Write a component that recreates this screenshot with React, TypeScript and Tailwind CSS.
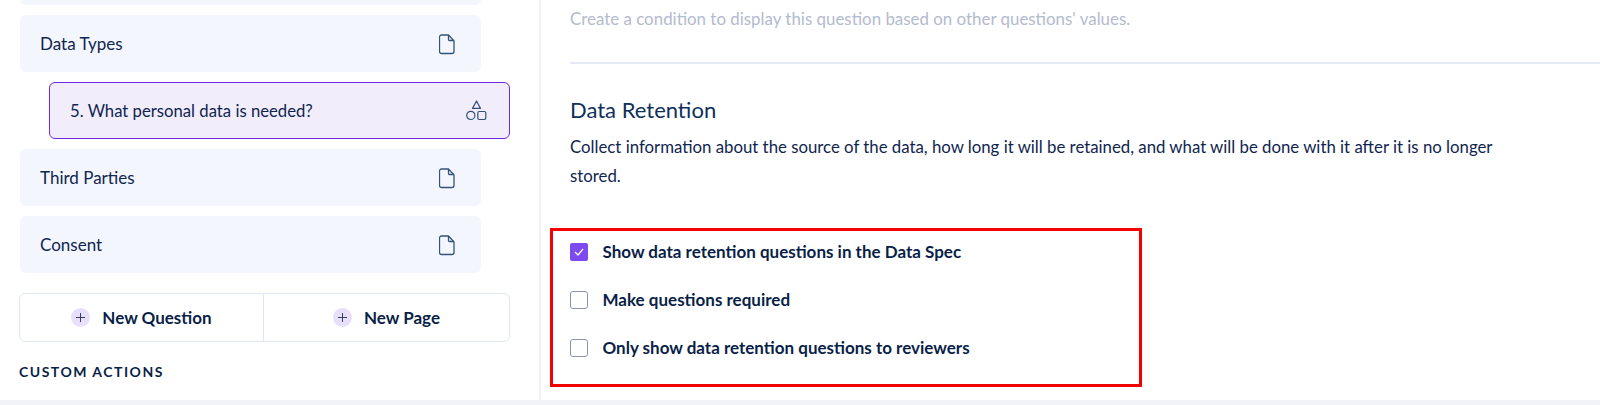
import React from "react";

function DocIcon() {
  return (
    <svg className="mt-[2px]" width="16" height="21" viewBox="0 0 16 21" fill="none" stroke="#33527a" strokeWidth="1.3" strokeLinejoin="round">
      <path d="M2.5 1h7L15 7v10.5a2 2 0 0 1-2 2H2.5a2 2 0 0 1-2-2V3a2 2 0 0 1 2-2z" />
      <path d="M9.5 1v4.5a1 1 0 0 0 1 1H15" />
    </svg>
  );
}

function ShapesIcon() {
  return (
    <svg width="21" height="21" viewBox="0 0 21 21" fill="none" stroke="#33527a" strokeWidth="1.2" strokeLinejoin="round">
      <path d="M10.5 1 L14.5 8.4 H6.5 Z" />
      <circle cx="4.8" cy="15.4" r="4.1" />
      <rect x="11.8" y="11.5" width="8" height="8" rx="1.4" />
    </svg>
  );
}

function Card({ label }: { label: string }) {
  return (
    <div className="flex h-[57px] w-[461px] items-center justify-between rounded-md bg-[#f4f6fe] pl-[20px] pr-[26px] text-[17px]">
      <span>{label}</span>
      <DocIcon />
    </div>
  );
}

function AddButton({ label, width }: { label: string; width: string }) {
  return (
    <div className={`flex h-full items-center justify-center gap-[12px] ${width}`}>
      <span className="flex h-[19px] w-[19px] items-center justify-center rounded-full bg-[#e7dffb]">
        <svg width="9" height="9" viewBox="0 0 9 9" stroke="#33415f" strokeWidth="1">
          <path d="M4.5 0v9M0 4.5h9" />
        </svg>
      </span>
      <span className="text-[17px] font-bold text-[#0a1f48]">{label}</span>
    </div>
  );
}

function Check({ label, checked }: { label: string; checked?: boolean }) {
  return (
    <label className="flex items-center gap-[14.5px]">
      {checked ? (
        <span className="flex h-[18px] w-[18px] items-center justify-center rounded-[2px] bg-[#7c4af0]">
          <svg width="10" height="8" viewBox="0 0 10 8" fill="none" stroke="#ffffff" strokeWidth="1.3">
            <path d="M1 4l3 3 5-6" />
          </svg>
        </span>
      ) : (
        <span className="h-[18px] w-[18px] rounded-[3px] border-[1.5px] border-[#8794ad] bg-white" />
      )}
      <span className="text-[17px] font-bold leading-[29px] text-[#0a1f48]">{label}</span>
    </label>
  );
}

export default function App() {
  return (
    <div className="flex h-[405px] w-[1600px] flex-col overflow-hidden bg-white font-['Lato','Open_Sans',sans-serif] text-[#0f2550]">
      <div className="flex min-h-0 flex-1">
        <aside className="flex w-[541px] shrink-0 flex-col border-r-2 border-[#f0f2fa] pl-[20px]">
          <div className="h-[5px] w-[461px] rounded-b-md bg-[#f4f6fe]" />
          <div className="mt-[10px] flex flex-col gap-[10px]">
            <Card label="Data Types" />
            <div className="ml-[29px] flex h-[57px] w-[461px] items-center justify-between rounded-md border border-[#6d28e8] bg-[#f2edfb] pl-[20px] pr-[22px] text-[16.7px]">
              <span className="pt-[3px]">5. What personal data is needed?</span>
              <ShapesIcon />
            </div>
            <Card label="Third Parties" />
            <Card label="Consent" />
          </div>
          <div className="mt-[20px] -ml-px flex h-[49px] w-[491px] divide-x-[1.5px] divide-[#e0e6f2] rounded-md border-[1.5px] border-[#e0e6f2]">
            <AddButton label="New Question" width="w-[244px]" />
            <AddButton label="New Page" width="flex-1" />
          </div>
          <div className="mt-[20px] -ml-px text-[14px] font-bold leading-[20px] tracking-[1.5px] text-[#0a1f48]">CUSTOM ACTIONS</div>
        </aside>
        <main className="flex min-w-0 flex-1 flex-col">
          <p className="ml-[29px] mt-[8px] text-[16.9px] leading-[22px] text-[#b3bbcf]">
            Create a condition to display this question based on other questions' values.
          </p>
          <div className="ml-[29px] mt-[32px] h-[2px] bg-[#e4e9f3]" />
          <h2 className="ml-[29px] mt-[32px] text-[22px] leading-[28px] text-[#0f2f5c]">Data Retention</h2>
          <p className="ml-[29px] mt-[8px] w-[950px] text-[16.8px] leading-[29px]">
            Collect information about the source of the data, how long it will be retained, and what will be done with it after it is no longer stored.
          </p>
          <div className="ml-[9px] mt-[38px] flex h-[159px] w-[592px] flex-col gap-[19px] border-[3px] border-[#f40000] pl-[17px] pt-[6px]">
            <Check label="Show data retention questions in the Data Spec" checked />
            <Check label="Make questions required" />
            <Check label="Only show data retention questions to reviewers" />
          </div>
        </main>
      </div>
      <div className="h-[5px] shrink-0 bg-[#f1f3f8]" />
    </div>
  );
}
